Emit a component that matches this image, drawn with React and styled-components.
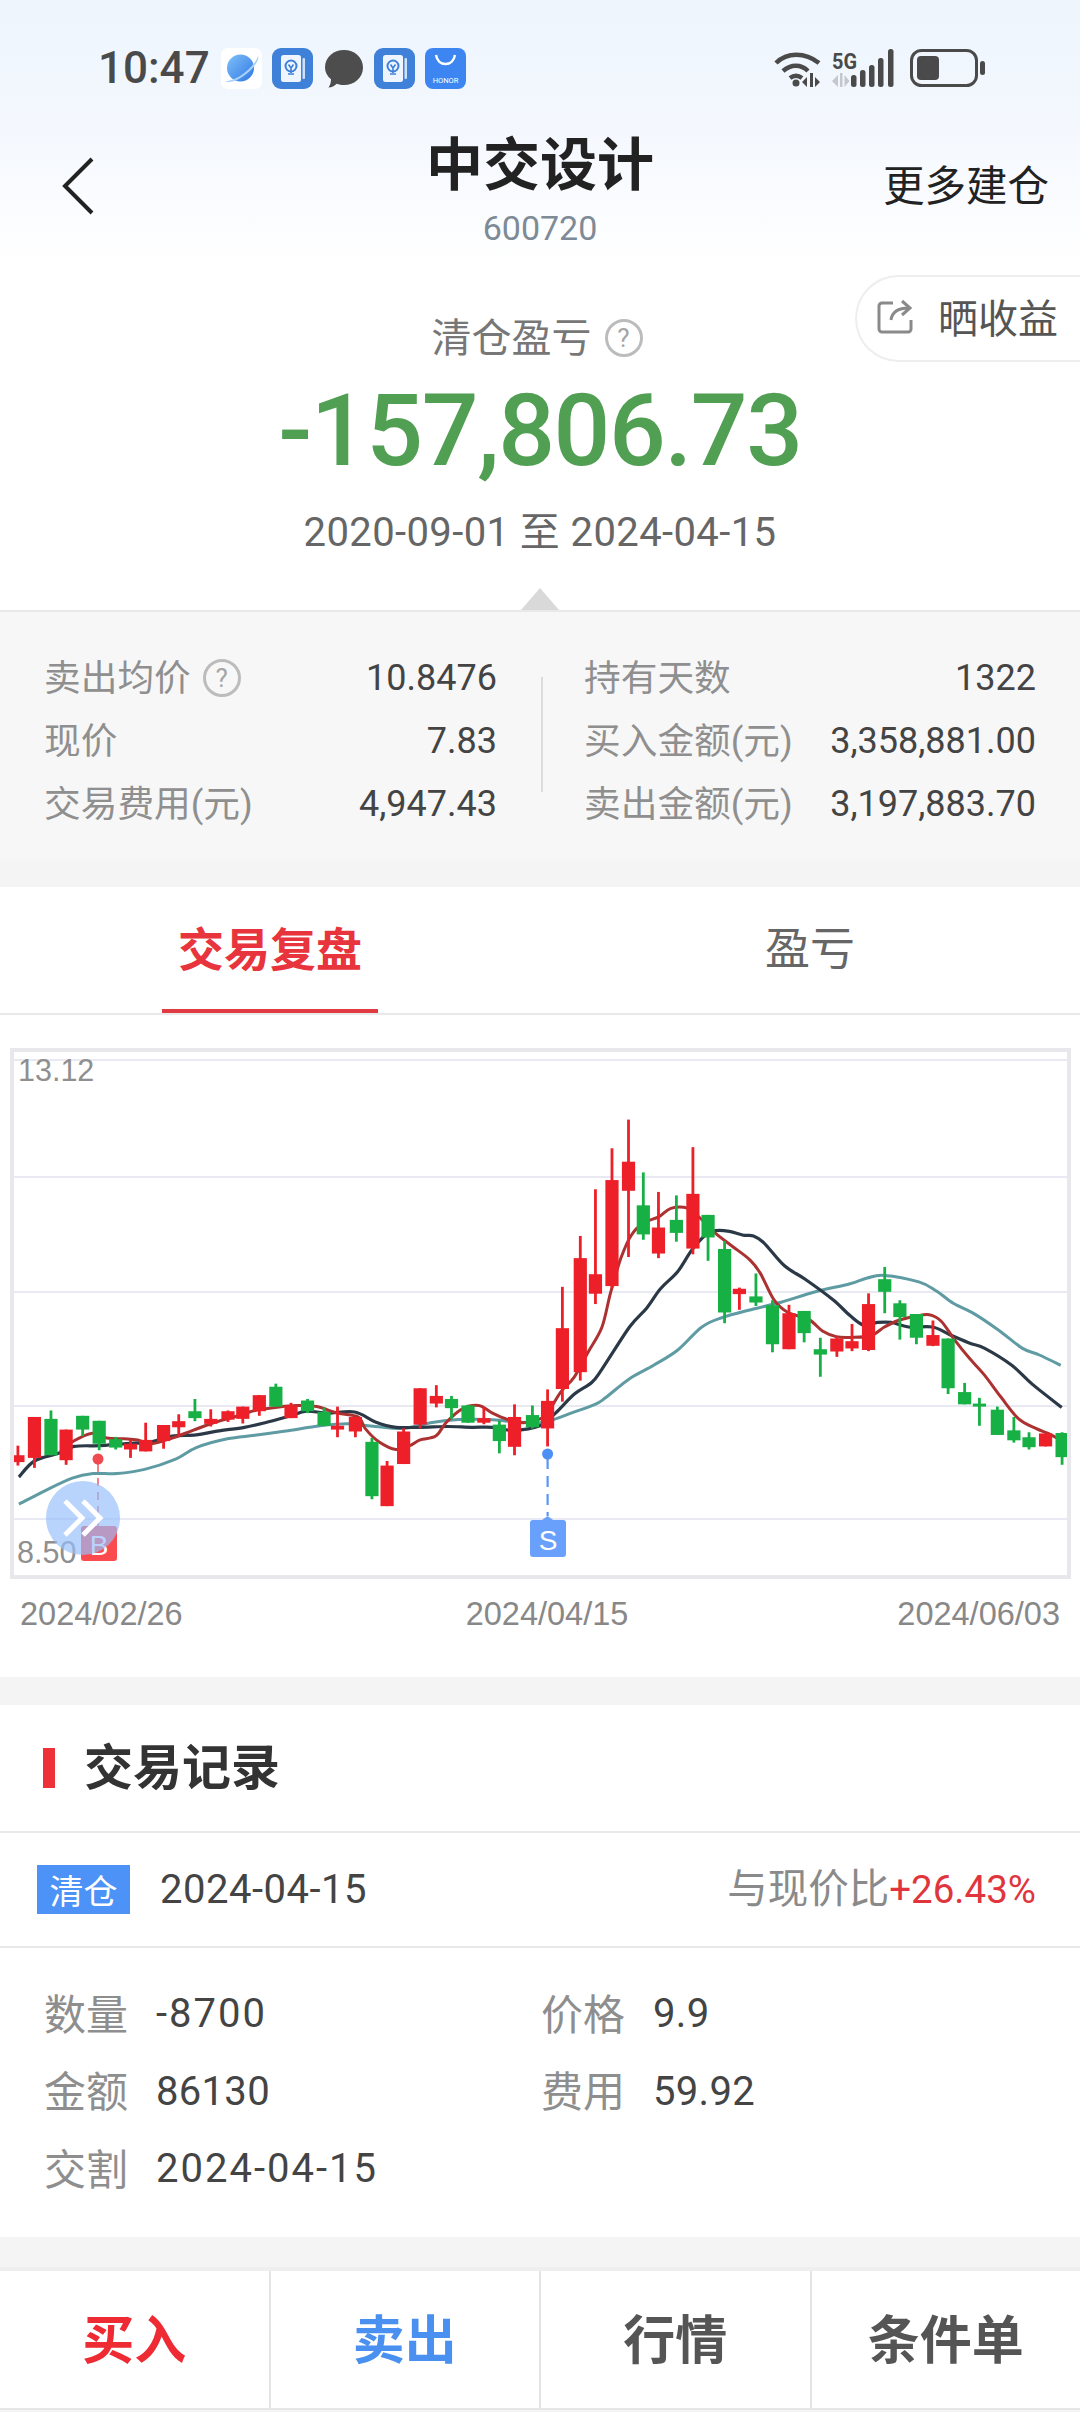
import React from 'react';
import styled, { createGlobalStyle } from 'styled-components';

const FONT = 'Roboto, "Noto Sans CJK SC", sans-serif';
const RED = '#ed2029';
const GREEN = '#17b045';
const BLUE = '#4c92f7';

const Global = createGlobalStyle`
  html, body { margin: 0; padding: 0; background: #f4f4f4; }
  body { font-family: ${FONT}; }
  * { box-sizing: border-box; }
`;

const Page = styled.div`
  width: 1080px;
  height: 2412px;
  overflow: hidden;
  background: #f4f4f4;
`;

/* top area with pale blue wash */
const Hero = styled.div`
  background: linear-gradient(#eef5fd 0, #f4f8fe 130px, #fff 264px);
`;

const StatusBar = styled.div`
  height: 108px;
  padding: 28px 95px 0 98px;
  display: flex;
  align-items: center;
`;
const Clock = styled.span`
  font-size: 44px;
  font-weight: 500;
  color: #4a4a4a;
  width: 110px;
  margin-right: 13px;
  line-height: 1;
`;
const AppIcons = styled.div`
  display: flex;
  gap: 10px;
`;
const StatusRight = styled.div`
  margin-left: auto;
  display: flex;
  align-items: center;
  gap: 11px;
`;
const BatterySlot = styled.div`
  display: flex;
  margin-left: 5px;
`;

const NavBar = styled.div`
  height: 156px;
  display: grid;
  grid-template-columns: 1fr auto 1fr;
  align-items: center;
`;
const Back = styled.div`
  padding-left: 62px;
  display: flex;
`;
const TitleBlock = styled.div`
  align-self: start;
  padding-top: 20px;
  display: flex;
  flex-direction: column;
  align-items: center;
`;
const Title = styled.div`
  font-size: 57px;
  font-weight: 700;
  line-height: 76px;
  color: #222;
`;
const Code = styled.div`
  font-size: 34px;
  line-height: 44px;
  margin-top: 2px;
  color: #7e8b97;
`;
const MoreLink = styled.div`
  justify-self: end;
  padding: 0 31px 6px 0;
  font-size: 41.5px;
  color: #222;
`;

const Summary = styled.div`
  position: relative;
  padding-top: 46px;
  display: flex;
  flex-direction: column;
  align-items: center;
  background: #fff;
`;
const ShareButton = styled.div`
  position: absolute;
  right: 0;
  top: 11px;
  width: 225px;
  height: 87px;
  display: flex;
  align-items: center;
  gap: 23px;
  padding: 0 0 6px 20px;
  border: 2px solid #eeeeee;
  border-right: 0;
  border-radius: 44px 0 0 44px;
  font-size: 40px;
  color: #555;
  background: #fff;
`;
const LabelRow = styled.div`
  height: 56px;
  margin-right: 6px;
  display: flex;
  align-items: center;
  gap: 13px;
  font-size: 40px;
  color: #777;
`;
const RaisedText = styled.span`
  margin-bottom: ${p => p.$lift}px;
`;
const HelpMark = styled.span`
  width: ${p => p.$size}px;
  height: ${p => p.$size}px;
  border: 3px solid #bcbcbc;
  border-radius: 50%;
  display: inline-flex;
  align-items: center;
  justify-content: center;
  font-size: ${p => p.$size - 12}px;
  line-height: 1;
  color: #a5a5a5;
  flex: none;
`;
const Amount = styled.div`
  margin-top: 10px;
  font-size: 100px;
  font-weight: 500;
  letter-spacing: -1.4px;
  line-height: 110px;
  color: #519f53;
`;
const DateRange = styled.div`
  margin-top: 22px;
  font-size: 40px;
  letter-spacing: 0.4px;
  line-height: 50px;
  color: #666;
`;
const Caret = styled.div`
  margin-top: 30px;
  width: 0;
  height: 0;
  border-left: 19px solid transparent;
  border-right: 19px solid transparent;
  border-bottom: 22px solid #d9d9d9;
`;

const StatsPanel = styled.div`
  height: 277px;
  border-top: 2px solid #e9e9e9;
  padding: 34px 44px 0;
  display: flex;
  align-items: flex-start;
  background: linear-gradient(#f7f7f7 0, #f7f7f7 245px, #f4f4f4 250px);
`;
const StatsColumn = styled.div`
  width: ${p => p.$width}px;
`;
const StatRow = styled.div`
  height: 63px;
  display: flex;
  align-items: center;
  justify-content: space-between;
`;
const StatName = styled.span`
  display: flex;
  align-items: center;
  gap: 12px;
  font-size: 36.7px;
  color: #8f8f8f;
`;
const StatValue = styled.span`
  font-size: 36px;
  color: #444;
`;
const StatsDivider = styled.div`
  width: 2px;
  height: 115px;
  margin: 31px 41px 0 44px;
  background: #dcdcdc;
`;

const Tabs = styled.div`
  height: 128px;
  display: flex;
  background: #fff;
  border-bottom: 2px solid #e9e9e9;
`;
const Tab = styled.div`
  position: relative;
  flex: 1;
  display: flex;
  align-items: center;
  justify-content: center;
  padding-bottom: 9px;
  font-size: ${p => (p.$active ? 46 : 45)}px;
  font-weight: ${p => (p.$active ? 700 : 400)};
  color: ${p => (p.$active ? '#e8343c' : '#666')};
  &::after {
    content: '';
    display: ${p => (p.$active ? 'block' : 'none')};
    position: absolute;
    left: 162px;
    width: 216px;
    bottom: 0;
    height: 4px;
    background: #e03a42;
  }
`;

const ChartSection = styled.div`
  height: 662px;
  padding: 33px 9px 0 10px;
  background: #fff;
`;
const ChartBox = styled.div`
  position: relative;
  height: 531px;
  border: 4px solid #e8e8ec;
  background: #fff;
`;
const ChartSvg = styled.svg`
  display: block;
`;
const JumpButton = styled.div`
  position: absolute;
  left: 32px;
  top: 429px;
  width: 74px;
  height: 74px;
  border-radius: 50%;
  background: rgba(150, 190, 250, 0.68);
  display: flex;
  align-items: center;
  justify-content: center;
`;
const AxisRow = styled.div`
  display: flex;
  justify-content: space-between;
  padding: 14px 11px 0 10px;
  font-family: "Liberation Sans", sans-serif;
  font-size: 32.5px;
  line-height: 42px;
  color: #888;
`;
const AxisMid = styled.span`
  margin-left: 14px;
`;

const Records = styled.div`
  margin-top: 28px;
  background: #fff;
`;
const RecordsHeading = styled.div`
  height: 128px;
  padding-left: 43px;
  display: flex;
  align-items: center;
  gap: 29px;
  border-bottom: 2px solid #e9e9e9;
  font-size: 49px;
  font-weight: 700;
  color: #333;
`;
const RedMark = styled.span`
  width: 12px;
  height: 40px;
  background: #ee3139;
`;
const RecordHead = styled.div`
  height: 115px;
  padding: 0 44px 0 37px;
  display: flex;
  align-items: center;
  border-bottom: 2px solid #e9e9e9;
`;
const Tag = styled.span`
  width: 93px;
  height: 49px;
  background: ${BLUE};
  color: #fff;
  font-size: 34px;
  display: flex;
  align-items: center;
  justify-content: center;
`;
const RecordDate = styled.span`
  margin-left: 30px;
  font-size: 40px;
  letter-spacing: 0.5px;
  color: #444;
`;
const Compare = styled.span`
  margin-left: auto;
  padding-bottom: 9px;
  font-size: 40.5px;
  color: #8a8a8a;
`;
const ComparePct = styled.span`
  font-size: 38.5px;
  color: #e0353d;
`;
const RecordBody = styled.div`
  height: 289px;
  padding: 27px 0 0 44px;
  display: grid;
  grid-template-columns: 497px 1fr;
  grid-auto-rows: 77.5px;
  align-items: center;
`;
const Field = styled.div`
  display: flex;
  align-items: center;
  gap: 28px;
`;
const FieldName = styled.span`
  font-size: 42px;
  color: #8e8e8e;
  margin-bottom: 5px;
`;
const FieldValue = styled.span`
  font-size: 40px;
  letter-spacing: ${p => (p.$spaced ? 2 : 0.3)}px;
  color: #444;
`;

const BottomBar = styled.div`
  margin-top: 30px;
  height: 143px;
  display: flex;
  background: #fff;
  border-top: 4px solid #eeeeee;
  border-bottom: 2px solid #e6e6e6;
`;
const BarItem = styled.div`
  flex: 1;
  display: flex;
  align-items: center;
  justify-content: center;
  padding-bottom: 6px;
  font-size: 52px;
  font-weight: 700;
  color: ${p => p.$color};
  & + & {
    border-left: 2px solid #e4e4e4;
  }
`;

/* candle rows: x, wick top, wick bottom, body top, body bottom, up/down */
const candles = [
  [52,1060,1112,1085,1103,'r'],[100,985,1118,985,1092,'r'],[148,968,1085,990,1085,'g'],
  [192,1018,1110,1018,1098,'r'],[240,982,1035,982,1018,'g'],[288,995,1072,995,1055,'g'],
  [336,1037,1070,1043,1065,'g'],[379,1045,1092,1055,1070,'r'],[423,1000,1075,1045,1075,'r'],
  [475,1006,1068,1006,1048,'r'],[519,978,1035,996,1012,'r'],[566,938,996,970,988,'g'],
  [612,965,1010,990,1003,'r'],[662,968,998,970,992,'r'],[705,958,1002,958,990,'r'],
  [753,928,982,928,970,'r'],[801,898,958,906,958,'g'],[845,948,988,955,988,'r'],
  [893,938,975,942,970,'g'],[941,960,1008,972,1008,'g'],[980,958,1038,1008,1018,'r'],
  [1032,985,1038,985,1023,'r'],[1080,1040,1200,1050,1192,'g'],[1124,1100,1218,1112,1218,'r'],
  [1172,1015,1108,1023,1108,'r'],[1220,910,1015,910,1005,'r'],[1267,902,960,930,950,'r'],
  [1311,930,990,938,962,'g'],[1359,953,1000,955,1000,'g'],[1405,960,1004,988,1000,'r'],
  [1450,995,1080,1005,1048,'g'],[1494,952,1085,985,1063,'r'],[1546,955,1015,980,1012,'g'],
  [1590,913,1062,943,1015,'r'],[1633,645,945,753,912,'r'],[1685,512,890,570,868,'r'],
  [1729,390,690,612,663,'r'],[1777,283,648,366,643,'r'],[1825,208,567,318,394,'r'],
  [1868,346,522,432,508,'g'],[1912,397,570,490,558,'r'],[1964,406,527,470,504,'g'],
  [2012,280,560,402,545,'r'],[2056,457,577,457,516,'g'],[2104,525,740,546,712,'g'],
  [2147,647,705,650,664,'r'],[2195,610,695,670,686,'g'],[2243,680,816,693,795,'g'],
  [2291,692,808,714,808,'r'],[2335,708,790,708,766,'g'],[2382,778,880,808,822,'g'],
  [2430,775,828,780,814,'r'],[2474,742,813,787,806,'r'],[2522,662,813,690,810,'r'],
  [2569,593,714,625,658,'g'],[2613,680,783,688,724,'g'],[2661,716,795,716,778,'g'],
  [2709,733,800,771,799,'r'],[2753,780,925,780,910,'g'],[2801,896,952,920,952,'g'],
  [2844,935,1008,950,958,'g'],[2896,958,1032,966,1032,'g'],[2944,985,1052,1020,1046,'g'],
  [2988,1025,1070,1038,1064,'g'],[3036,1028,1062,1028,1062,'r'],[3084,1025,1110,1027,1090,'g'],
];

const ma5 = [
  [175,1075],[210,1050],[265,1028],[310,1040],[360,1042],[400,1045],[440,1055],[500,1040],[560,1020],
  [620,1000],[680,985],[740,968],[800,960],[860,955],[920,958],[980,975],[1040,985],[1060,1015],
  [1100,1050],[1150,1070],[1190,1060],[1220,1045],[1265,1035],[1295,1000],[1340,965],[1390,955],
  [1430,975],[1475,992],[1520,1000],[1568,990],[1590,975],[1628,920],[1668,880],[1708,815],[1748,750],
  [1773,660],[1803,570],[1833,510],[1868,478],[1913,462],[1948,440],[1998,440],[2033,465],[2078,505],
  [2128,540],[2178,575],[2208,610],[2248,680],[2288,712],[2348,730],[2388,760],[2428,775],[2468,777],
  [2528,773],[2568,750],[2608,733],[2658,722],[2698,718],[2733,735],[2773,785],[2813,830],[2858,875],
  [2908,935],[2958,990],[3008,1015],[3048,1030],[3078,1045],
];
const ma10 = [
  [55,1142],[100,1100],[170,1080],[215,1062],[290,1060],[360,1055],[440,1050],[500,1035],[570,1032],
  [630,1022],[710,1012],[770,1000],[840,983],[890,970],[950,975],[1030,972],[1090,998],[1150,1012],
  [1220,1012],[1300,1010],[1370,1012],[1430,1012],[1490,1020],[1568,1008],[1613,975],[1668,925],
  [1718,895],[1748,860],[1828,750],[1878,700],[1918,650],[1968,605],[2008,550],[2048,510],[2078,498],
  [2118,500],[2158,510],[2188,512],[2218,530],[2278,590],[2338,625],[2418,678],[2468,720],[2508,745],
  [2548,738],[2588,738],[2638,750],[2708,750],[2758,770],[2818,793],[2858,805],[2938,850],[2998,900],
  [3083,960],
];
const ma20 = [
  [55,1213],[130,1178],[210,1145],[270,1133],[340,1133],[420,1122],[510,1095],[570,1065],[660,1042],
  [740,1033],[830,1022],[930,1008],[1010,1003],[1090,1010],[1170,1015],[1250,1000],[1330,992],
  [1420,992],[1500,998],[1568,1000],[1613,990],[1658,975],[1728,952],[1758,935],[1828,885],[1898,850],
  [1968,810],[2038,750],[2098,725],[2188,703],[2268,685],[2368,658],[2468,637],[2518,622],[2568,615],
  [2668,632],[2718,655],[2768,688],[2828,715],[2898,757],[2968,805],[3018,823],[3080,850],
];

const px = x => x / 2.9037;
const py = y => 1040 + y / 2.613;

/* smooth line through the sampled points */
const smoothPath = pts => {
  const p = pts.map(([x, y]) => [px(x), py(y)]);
  let d = `M${p[0][0].toFixed(1)} ${p[0][1].toFixed(1)}`;
  for (let i = 0; i < p.length - 1; i++) {
    const a = p[i - 1] || p[i];
    const b = p[i];
    const c = p[i + 1];
    const e = p[i + 2] || c;
    const c1x = b[0] + (c[0] - a[0]) / 6;
    const c1y = b[1] + (c[1] - a[1]) / 6;
    const c2x = c[0] - (e[0] - b[0]) / 6;
    const c2y = c[1] - (e[1] - b[1]) / 6;
    d += `C${c1x.toFixed(1)} ${c1y.toFixed(1)} ${c2x.toFixed(1)} ${c2y.toFixed(1)} ${c[0].toFixed(1)} ${c[1].toFixed(1)}`;
  }
  return d;
};

const gridYs = [1060, 1177, 1292, 1406, 1519];

const KLine = () => (
  <ChartSvg width="1053" height="523" viewBox="14 1052 1053 523">
    {gridYs.map(y => (
      <line key={y} x1="14" x2="1067" y1={y} y2={y} stroke="#e9e9f3" strokeWidth="2" />
    ))}
    <text x="18" y="1081" fontFamily="Liberation Sans, sans-serif" fontSize="30.5" fill="#8f8f8f">13.12</text>
    <text x="17" y="1563" fontFamily="Liberation Sans, sans-serif" fontSize="30.5" fill="#8f8f8f">8.50</text>
    <path d={smoothPath(ma20)} fill="none" stroke="#5f9ba3" strokeWidth="3" />
    <path d={smoothPath(ma10)} fill="none" stroke="#2b3947" strokeWidth="3.2" />
    <path d={smoothPath(ma5)} fill="none" stroke="#ac3131" strokeWidth="3" />
    {candles.map(([x, wt, wb, bt, bb, c]) => {
      const fill = c === 'r' ? RED : GREEN;
      const cx = px(x);
      return (
        <g key={x} fill={fill}>
          <rect x={cx - 1.4} y={py(wt)} width="2.8" height={py(wb) - py(wt)} />
          <rect x={cx - 6.6} y={py(bt)} width="13.2" height={Math.max(py(bb) - py(bt), 3)} />
        </g>
      );
    })}
    <line x1="98" x2="98" y1="1464" y2="1526" stroke="#f0656c" strokeWidth="1.6" strokeDasharray="8 6" />
    <circle cx="98" cy="1459" r="5.5" fill="#f04a50" />
    <rect x="81" y="1526" width="36" height="35" rx="3" fill="#fb4b4f" />
    <text x="99" y="1555" textAnchor="middle" fontFamily="Liberation Sans, sans-serif" fontSize="28" fill="#fff">B</text>
    <line x1="547.6" x2="547.6" y1="1458" y2="1516" stroke="#5b96f5" strokeWidth="2.2" strokeDasharray="11 7" />
    <circle cx="547.6" cy="1454" r="5.5" fill="#4c8ff5" />
    <path d="M533 1520h9l5.6-4 5.6 4H563a3 3 0 0 1 3 3v31a3 3 0 0 1-3 3h-30a3 3 0 0 1-3-3v-31a3 3 0 0 1 3-3z" fill="#69a0fb" />
    <text x="548" y="1550" textAnchor="middle" fontFamily="Liberation Sans, sans-serif" fontSize="28" fill="#fff">S</text>
  </ChartSvg>
);

const BackChevron = () => (
  <svg width="32" height="58" viewBox="0 0 32 58" fill="none">
    <path d="M30 2 3 29l27 27" stroke="#222" strokeWidth="4" />
  </svg>
);

const PlanetIcon = () => (
  <svg width="41" height="41" viewBox="0 0 41 41">
    <defs>
      <linearGradient id="planet" x1="0" y1="0" x2="1" y2="1">
        <stop offset="0" stopColor="#7fc0f8" />
        <stop offset="1" stopColor="#2f78e4" />
      </linearGradient>
    </defs>
    <rect width="41" height="41" rx="7" fill="#fff" />
    <circle cx="19.5" cy="20" r="13.5" fill="url(#planet)" />
    <path d="M4 33C14 34 33 20 37 8c1 3-1 6-3 9C27 27 12 37 4 33z" fill="#a7d0fa" />
  </svg>
);

const TipsIcon = () => (
  <svg width="41" height="41" viewBox="0 0 41 41">
    <rect width="41" height="41" rx="9" fill="#3f80d9" />
    <rect x="9" y="7" width="20" height="27" rx="2.5" fill="#eef5fe" />
    <rect x="30.5" y="10" width="2.5" height="21" rx="1" fill="#cfe2fb" />
    <circle cx="19" cy="18" r="5.5" fill="none" stroke="#3f80d9" strokeWidth="2" />
    <path d="M16.500 16.500 19 20l2.500-3.500M19 20v5M16 26h6" fill="none" stroke="#3f80d9" strokeWidth="1.6" />
  </svg>
);

const BubbleIcon = () => (
  <svg width="41" height="41" viewBox="0 0 41 41">
    <path d="M21 2c10.500 0 19 7.400 19 17.500S31.500 37 21 37c-2.500 0-5-.4-7.300-1.300C11.500 38 8.800 39.500 5.500 39.500c1.500-2 2.500-4.800 2.500-8.200C4 28 2 24 2 19.500 2 9.400 10.500 2 21 2z" fill="#4d4d4d" />
  </svg>
);

const StoreIcon = () => (
  <svg width="41" height="41" viewBox="0 0 41 41">
    <rect width="41" height="41" rx="8" fill="#3d86f2" />
    <path d="M11 7c1 6 5 9 9.500 9S29 13 30 7" fill="none" stroke="#fff" strokeWidth="2.4" />
    <text x="20.5" y="35" textAnchor="middle" fontFamily="Roboto, sans-serif" fontSize="7.5" fill="#fff">HONOR</text>
  </svg>
);

const WifiIcon = () => (
  <svg width="47" height="38" viewBox="0 0 47 38" fill="none" stroke="#4a4a4a" strokeWidth="4.5">
    <path d="M2 14C13 3 31 3 45 14" />
    <path d="M9 22c8-7 18-7 25 0" />
    <path d="M16 29c4-3 8-3 12 0" />
    <circle cx="22" cy="34" r="3.5" fill="#4a4a4a" stroke="none" />
    <path d="M33 28l-5 5 5 5zM36 24h3v14h-3zM41 28l5 5-5 5z" fill="#4a4a4a" stroke="none" />
  </svg>
);

const SignalIcon = () => (
  <svg width="62" height="38" viewBox="0 0 62 38">
    <text x="0" y="20" fontFamily="Roboto, sans-serif" fontWeight="700" fontSize="22" fill="#4a4a4a" textLength="25" lengthAdjust="spacingAndGlyphs">5G</text>
    <path d="M6 26v12L0 32zM8 24h2.500v14H8zM12.500 26l5 6-5 6z" fill="#c4c7cb" />
    {[[19, 26], [28, 21], [37, 16], [46, 9], [56, 0]].map(([x, y]) => (
      <rect key={x} x={x} y={y} width="5.5" height={38 - y} rx="2.5" fill="#4a4a4a" />
    ))}
  </svg>
);

const BatteryIcon = () => (
  <svg width="75" height="38" viewBox="0 0 75 38">
    <rect x="1.5" y="1.5" width="65" height="35" rx="10" fill="none" stroke="#4a4a4a" strokeWidth="3" />
    <rect x="7" y="7" width="22" height="24" rx="4" fill="#4a4a4a" />
    <rect x="70" y="12" width="5" height="14" rx="2.5" fill="#4a4a4a" />
  </svg>
);

const ShareGlyph = () => (
  <svg width="38" height="36" viewBox="0 0 38 36" fill="none" stroke="#8a8a8a" strokeWidth="3">
    <path d="M16 5H5a3 3 0 0 0-3 3v23a3 3 0 0 0 3 3h26a3 3 0 0 0 3-3V22" />
    <path d="M14 22c1-8 7-12 18-12M25 3l8 7-8 7" />
  </svg>
);

const JumpGlyph = () => (
  <svg width="42" height="40" viewBox="0 0 42 40" fill="none" stroke="#fff" strokeWidth="5">
    <path d="M3 3l17 17L3 37M21 3l17 17-17 17" />
  </svg>
);

const leftStats = [
  ['卖出均价', '10.8476', true],
  ['现价', '7.83'],
  ['交易费用(元)', '4,947.43'],
];
const rightStats = [
  ['持有天数', '1322'],
  ['买入金额(元)', '3,358,881.00'],
  ['卖出金额(元)', '3,197,883.70'],
];
const fields = [
  ['数量', '-8700'],
  ['价格', '9.9'],
  ['金额', '86130'],
  ['费用', '59.92'],
  ['交割', '2024-04-15'],
];

const StatList = ({ rows }) =>
  rows.map(([name, value, help]) => (
    <StatRow key={name}>
      <StatName>
        <RaisedText $lift={5}>{name}</RaisedText>
        {help && <HelpMark $size={38}>?</HelpMark>}
      </StatName>
      <StatValue>{value}</StatValue>
    </StatRow>
  ));

export default function App() {
  return (
    <Page>
      <Global />
      <Hero>
        <StatusBar>
          <Clock>10:47</Clock>
          <AppIcons>
            <PlanetIcon />
            <TipsIcon />
            <BubbleIcon />
            <TipsIcon />
            <StoreIcon />
          </AppIcons>
          <StatusRight>
            <WifiIcon />
            <SignalIcon />
            <BatterySlot><BatteryIcon /></BatterySlot>
          </StatusRight>
        </StatusBar>
        <NavBar>
          <Back><BackChevron /></Back>
          <TitleBlock>
            <Title>中交设计</Title>
            <Code>600720</Code>
          </TitleBlock>
          <MoreLink>更多建仓</MoreLink>
        </NavBar>
      </Hero>
      <Summary>
        <ShareButton>
          <ShareGlyph />
          晒收益
        </ShareButton>
        <LabelRow>
          <RaisedText $lift={6}>清仓盈亏</RaisedText>
          <HelpMark $size={38}>?</HelpMark>
        </LabelRow>
        <Amount>-157,806.73</Amount>
        <DateRange>2020-09-01 至 2024-04-15</DateRange>
        <Caret />
      </Summary>
      <StatsPanel>
        <StatsColumn $width={453}><StatList rows={leftStats} /></StatsColumn>
        <StatsDivider />
        <StatsColumn $width={452}><StatList rows={rightStats} /></StatsColumn>
      </StatsPanel>
      <Tabs>
        <Tab $active>交易复盘</Tab>
        <Tab>盈亏</Tab>
      </Tabs>
      <ChartSection>
        <ChartBox>
          <KLine />
          <JumpButton><JumpGlyph /></JumpButton>
        </ChartBox>
        <AxisRow>
          <span>2024/02/26</span>
          <AxisMid>2024/04/15</AxisMid>
          <span>2024/06/03</span>
        </AxisRow>
      </ChartSection>
      <Records>
        <RecordsHeading>
          <RedMark />
          <RaisedText $lift={9}>交易记录</RaisedText>
        </RecordsHeading>
        <RecordHead>
          <Tag>清仓</Tag>
          <RecordDate>2024-04-15</RecordDate>
          <Compare>与现价比<ComparePct>+26.43%</ComparePct></Compare>
        </RecordHead>
        <RecordBody>
          {fields.map(([name, value]) => (
            <Field key={name}>
              <FieldName>{name}</FieldName>
              <FieldValue $spaced={value.includes('-')}>{value}</FieldValue>
            </Field>
          ))}
        </RecordBody>
      </Records>
      <BottomBar>
        <BarItem $color="#ee2a33">买入</BarItem>
        <BarItem $color="#4a90f0">卖出</BarItem>
        <BarItem $color="#555">行情</BarItem>
        <BarItem $color="#555">条件单</BarItem>
      </BottomBar>
    </Page>
  );
}
